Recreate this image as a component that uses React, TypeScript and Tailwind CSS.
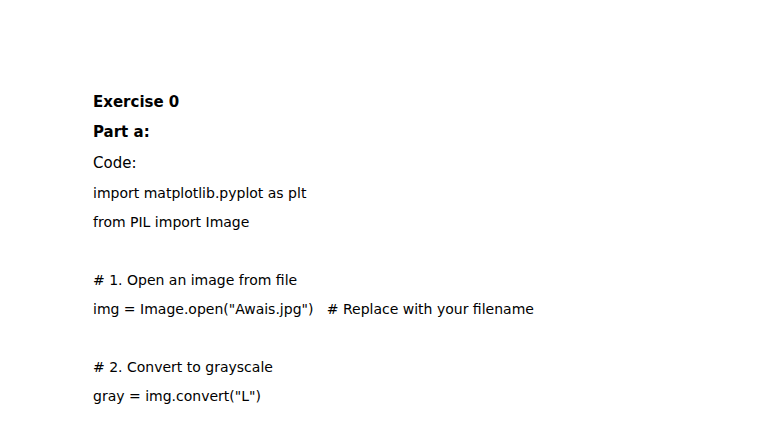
const codeLines = [
  "import matplotlib.pyplot as plt",
  "from PIL import Image",
  "",
  "# 1. Open an image from file",
  'img = Image.open("Awais.jpg")\u00a0\u00a0\u00a0# Replace with your filename',
  "",
  "# 2. Convert to grayscale",
  'gray = img.convert("L")',
];

export default function App() {
  return (
    <div className="w-[784px] h-[441px] overflow-hidden bg-white text-black font-['DejaVu_Sans',sans-serif]">
      <div className="pt-[87px] pl-[93px]">
        <div className="h-[30px] flex items-center text-[15px] font-bold">Exercise 0</div>
        <div className="h-[31px] flex items-center text-[15px] font-bold">Part a:</div>
        <div className="h-[31px] flex items-center text-[15px]">Code:</div>
        {codeLines.map((line, i) => (
          <div key={i} className="h-[29px] flex items-center text-[14px] whitespace-pre">
            {line}
          </div>
        ))}
      </div>
    </div>
  );
}
